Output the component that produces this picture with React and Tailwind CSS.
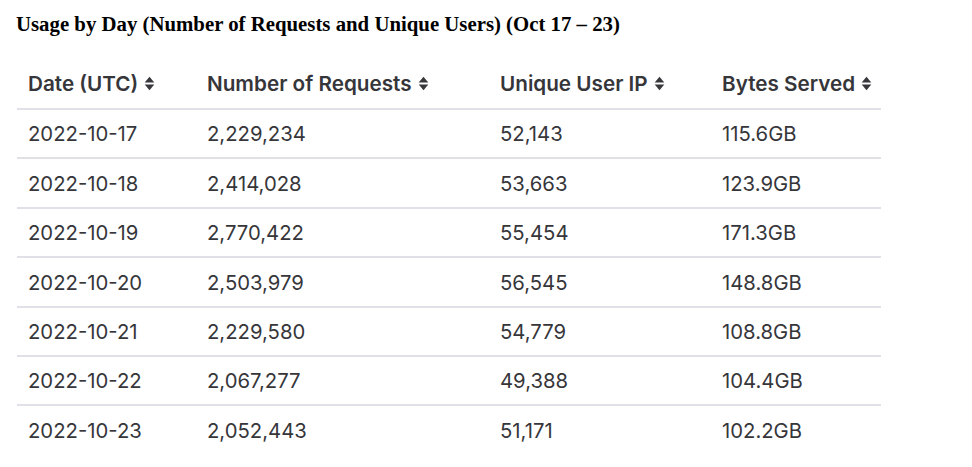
import React from 'react'

const rows = [
  ['2022-10-17', '2,229,234', '52,143', '115.6GB'],
  ['2022-10-18', '2,414,028', '53,663', '123.9GB'],
  ['2022-10-19', '2,770,422', '55,454', '171.3GB'],
  ['2022-10-20', '2,503,979', '56,545', '148.8GB'],
  ['2022-10-21', '2,229,580', '54,779', '108.8GB'],
  ['2022-10-22', '2,067,277', '49,388', '104.4GB'],
  ['2022-10-23', '2,052,443', '51,171', '102.2GB'],
]

const cols = ['w-[179px]', 'w-[293px]', 'w-[222px]', 'w-[170px]']

function SortIcon() {
  return (
    <svg width="11" height="15" viewBox="0 0 11 15" className="ml-[6px] inline-block">
      <path d="M5.5 0.8 L10.3 6.6 L0.7 6.6 Z" fill="#38383c" />
      <path d="M5.5 14.2 L10.3 8.4 L0.7 8.4 Z" fill="#38383c" />
    </svg>
  )
}

export default function App() {
  return (
    <div className="w-[972px] h-[467px] bg-white overflow-hidden">
      <h1 className="pl-[16px] pt-[12px] text-[20.8px] leading-[24px] font-bold text-black font-['Liberation_Serif',serif]">
        Usage by Day (Number of Requests and Unique Users) (Oct 17 – 23)
      </h1>

      <table className="ml-[17px] mt-[24px] border-collapse font-['Inter',sans-serif] text-[20.3px] text-[#36363a]">
        <thead>
          <tr className="h-[49px] border-b-2 border-[#e0e0e6]">
            {['Date (UTC)', 'Number of Requests', 'Unique User IP', 'Bytes Served'].map((h, i) => (
              <th key={h} className={`${cols[i]} pl-[11px] text-left text-[20.7px] font-semibold`}>
                <span className="inline-flex items-center">
                  {h}
                  <SortIcon />
                </span>
              </th>
            ))}
          </tr>
        </thead>
        <tbody>
          {rows.map((r, ri) => (
            <tr key={r[0]} className={`h-[49.4px] ${ri < rows.length - 1 ? 'border-b-2 border-[#e0e0e6]' : ''}`}>
              {r.map((c, i) => (
                <td key={i} className={`${cols[i]} pl-[11px] pt-[2px]`}>{c}</td>
              ))}
            </tr>
          ))}
        </tbody>
      </table>
    </div>
  )
}
